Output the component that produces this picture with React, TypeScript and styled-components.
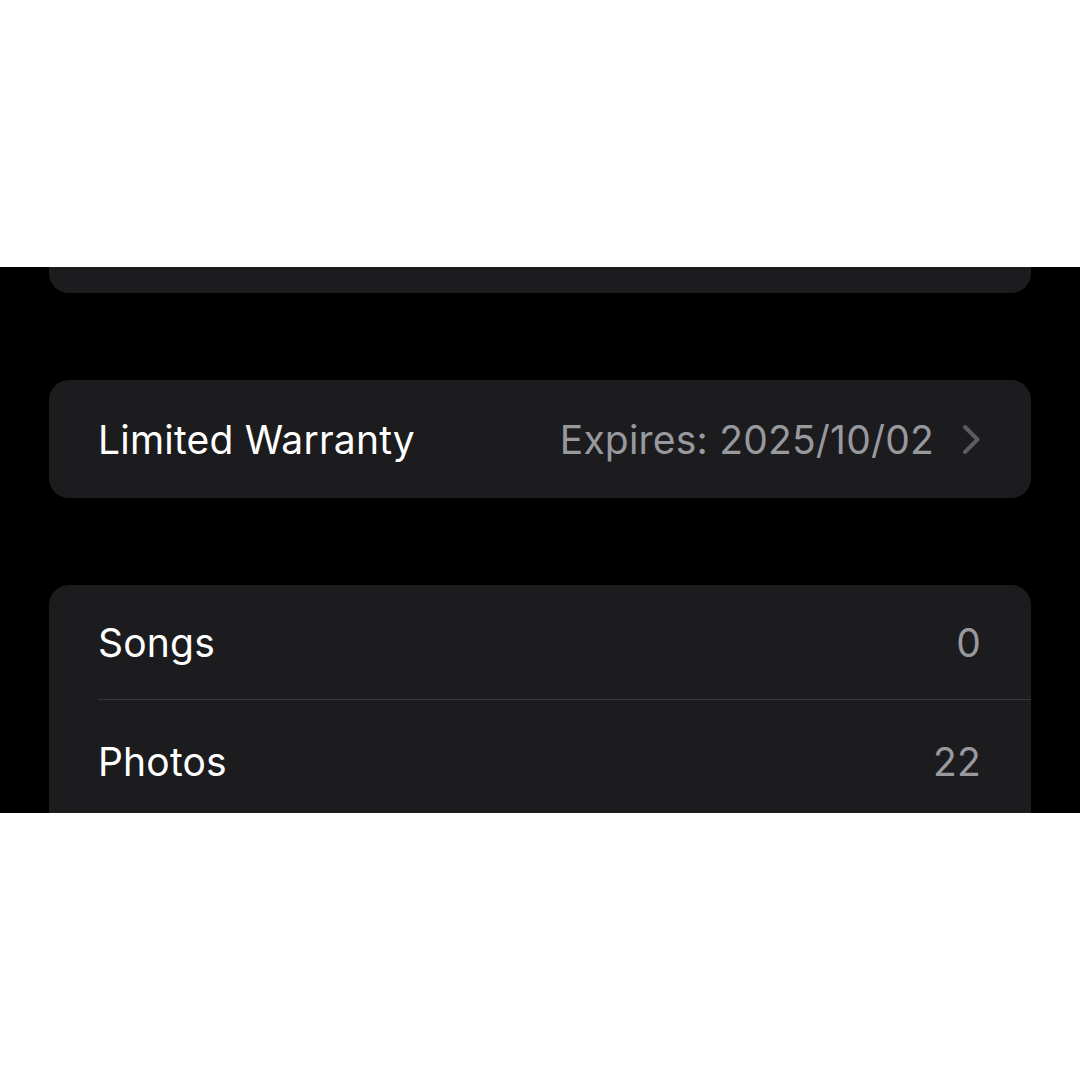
import React from "react";
import styled, { createGlobalStyle } from "styled-components";

const Global = createGlobalStyle`
  html, body { margin: 0; padding: 0; background: #ffffff; }
  body { font-family: Inter, "Noto Sans", "Liberation Sans", sans-serif; -webkit-font-smoothing: antialiased; }
`;

const Page = styled.div`
  width: 1080px;
  height: 1080px;
  background: #ffffff;
  display: flex;
  flex-direction: column;
`;

const TopSpace = styled.div`
  height: 267px;
  flex: none;
`;

const Band = styled.div`
  height: 546px;
  flex: none;
  background: #000000;
  overflow: hidden;
  padding: 0 49px;
  box-sizing: border-box;
  display: flex;
  flex-direction: column;
  gap: 87px;
`;

const Card = styled.div<{ $clipTop?: boolean }>`
  background: #1c1c1e;
  border-radius: ${(p) => (p.$clipTop ? "0 0 20px 20px" : "20px")};
  flex: none;
  overflow: hidden;
`;

const TopStub = styled(Card)`
  height: 26px;
`;

const Row = styled.div<{ $h: number }>`
  height: ${(p) => p.$h}px;
  display: flex;
  align-items: center;
  padding: 0 50px 0 49px;
  box-sizing: border-box;
`;

const Label = styled.span`
  color: #ffffff;
  font-size: 39px;
  letter-spacing: 0.2px;
  flex: 1;
`;

const Value = styled.span`
  color: #98989f;
  font-size: 39px;
  letter-spacing: 0.2px;
`;

const Chevron = styled.svg`
  width: 19px;
  height: 31px;
  margin-left: 28px;
  flex: none;
`;

const Divider = styled.div`
  height: 1px;
  background: #38383a;
  margin-left: 49px;
`;

const PhotosRow = styled(Row)`
  align-items: flex-start;
  padding-top: 38px;
`;

export default function App() {
  return (
    <>
      <Global />
      <Page>
        <TopSpace />
        <Band>
          <TopStub $clipTop />
          <Card>
            <Row $h={118}>
              <Label>Limited Warranty</Label>
              <Value>Expires: 2025/10/02</Value>
              <Chevron viewBox="0 0 19 31">
                <path
                  d="M3 3 L15.5 15.5 L3 28"
                  fill="none"
                  stroke="#5b5b60"
                  strokeWidth="4"
                  strokeLinecap="round"
                  strokeLinejoin="round"
                />
              </Chevron>
            </Row>
          </Card>
          <Card>
            <Row $h={114}>
              <Label>Songs</Label>
              <Value>0</Value>
            </Row>
            <Divider />
            <PhotosRow $h={180}>
              <Label>Photos</Label>
              <Value>22</Value>
            </PhotosRow>
          </Card>
        </Band>
      </Page>
    </>
  );
}
